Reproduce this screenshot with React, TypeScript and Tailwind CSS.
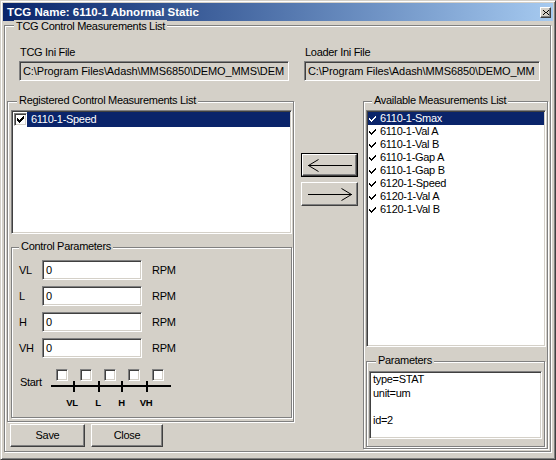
import React from 'react';

const sunken =
  'border border-t-[#808080] border-l-[#808080] border-b-white border-r-white shadow-[inset_1px_1px_0_#404040,inset_-1px_-1px_0_#d4d0c8]';
const raised =
  'border border-t-white border-l-white border-b-[#404040] border-r-[#404040] shadow-[inset_-1px_-1px_0_#808080]';

const BOX_CHECK = ['......X', '.....XX', 'X...XXX', 'XX.XXX.', 'XXXXX..', '.XXX...', '..X....'];
const LIST_CHECK = ['......X', '.....XX', 'X...XX.', 'XX.XX..', '.XXX...', '..X....'];

const CheckGlyph: React.FC<{ color?: string; pattern: string[] }> = ({ color = '#000', pattern }) => (
  <svg width="7" height={pattern.length} viewBox={`0 0 7 ${pattern.length}`} shapeRendering="crispEdges" className="block">
    {pattern.map((row, y) =>
      row.split('').map((c, x) => (c === 'X' ? <rect key={`${x}-${y}`} x={x} y={y} width="1" height="1" fill={color} /> : null))
    )}
  </svg>
);

const GroupBox: React.FC<{ label: string; labelClass: string; className: string; children?: React.ReactNode }> = ({
  label,
  labelClass,
  className,
  children,
}) => (
  <div className={`relative border border-[#808080] shadow-[1px_1px_0_#fff,inset_1px_1px_0_#fff] ${className}`}>
    <span className={`absolute ${labelClass} bg-[#d4d0c8] px-[2px] leading-[13px] whitespace-nowrap`}>{label}</span>
    {children}
  </div>
);

const Field: React.FC<{ label: string; value: string; width: string; gap?: string }> = ({ label, value, width, gap = '' }) => (
  <div className={`${width} ${gap}`}>
    <div className="pl-[1px] leading-[13px]">{label}</div>
    <div className={`mt-[2px] h-[20px] ${sunken} bg-[#d4d0c8] overflow-hidden whitespace-nowrap pl-[3px] leading-[18px] tracking-[-0.1px]`}>
      {value}
    </div>
  </div>
);

const available = [
  '6110-1-Smax',
  '6110-1-Val A',
  '6110-1-Val B',
  '6110-1-Gap A',
  '6110-1-Gap B',
  '6120-1-Speed',
  '6120-1-Val A',
  '6120-1-Val B',
];

const limits = ['VL', 'L', 'H', 'VH'];

export default function App() {
  return (
    <div className="w-[556px] h-[460px] overflow-hidden bg-[#d4d0c8] font-['Liberation_Sans',Arial,sans-serif] text-[11px] tracking-[-0.3px] text-black border border-t-[#d4d0c8] border-l-[#d4d0c8] border-b-[#404040] border-r-[#404040] shadow-[inset_1px_1px_0_#fff,inset_-1px_-1px_0_#808080] p-[2px] flex flex-col">
      {/* title bar */}
      <div className="h-[18px] shrink-0 bg-linear-to-r from-[#0a246a] to-[#a6caf0] flex items-center justify-between pl-[4px] pr-[2px]">
        <span className="text-white font-bold text-[11.5px] tracking-normal leading-[18px]">TCG Name: 6110-1 Abnormal Static</span>
        <div className={`w-[11px] h-[11px] bg-[#d4d0c8] ${raised} flex items-center justify-center`}>
          <svg width="6" height="5" viewBox="0 0 6 5" shapeRendering="crispEdges">
            <path d="M0 0h1v1H0zM5 0h1v1H5zM1 1h1v1H1zM4 1h1v1H4zM2 2h2v1H2zM1 3h1v1H1zM4 3h1v1H4zM0 4h1v1H0zM5 4h1v1H5z" fill="#000" />
          </svg>
        </div>
      </div>

      <GroupBox label="TCG Control Measurements List" labelClass="top-[-6px] left-[9px]" className="mt-[4px] ml-[1px] w-[547px] h-[427px] shrink-0">
        <div className="flex pt-[20px] pl-[14px]">
          <Field label="TCG Ini File" value={'C:\\Program Files\\Adash\\MMS6850\\DEMO_MMS\\DEM'} width="w-[270px]" />
          <Field label="Loader Ini File" value={'C:\\Program Files\\Adash\\MMS6850\\DEMO_MM'} width="w-[236px]" gap="ml-[15px]" />
        </div>

        <div className="flex mt-[20px] pl-[2px]">
          {/* left column */}
          <div className="w-[287px]">
            <GroupBox label="Registered Control Measurements List" labelClass="top-[-8px] left-[9px]" className="w-[287px] h-[321px]">
              <div className={`mt-[8px] ml-[3px] w-[281px] h-[124px] bg-white ${sunken} p-[1px]`}>
                <div className="flex items-start h-[15px]">
                  <div className={`ml-[1px] mt-[1px] w-[13px] h-[13px] bg-white ${sunken} flex items-center justify-center`}>
                    <CheckGlyph pattern={BOX_CHECK} />
                  </div>
                  <div className="flex-1 h-[15px] bg-[#0a246a] text-white pl-[4px] leading-[15px]">6110-1-Speed</div>
                </div>
              </div>

              <GroupBox label="Control Parameters" labelClass="top-[-8px] left-[7px]" className="mt-[13px] ml-[3px] w-[281px] h-[171px]">
                <div className="pt-[12px] pl-[7px]">
                  <div className="flex flex-col gap-[6px]">
                    {limits.map((l) => (
                      <div key={l} className="flex items-center h-[20px]">
                        <span className="w-[23px] leading-[13px]">{l}</span>
                        <div className={`w-[100px] h-[20px] bg-white ${sunken} pl-[3px] leading-[18px]`}>0</div>
                        <span className="ml-[10px] leading-[13px]">RPM</span>
                      </div>
                    ))}
                  </div>

                  <div className="flex items-start mt-[11px]">
                    <span className="w-[32px] pl-[1px] mt-[7px] leading-[13px]">Start</span>
                    <div>
                      <div className="flex gap-[12px] pl-[5px]">
                        {[0, 1, 2, 3, 4].map((i) => (
                          <div key={i} className={`w-[12px] h-[12px] bg-white ${sunken}`} />
                        ))}
                      </div>
                      <svg width="122" height="30" viewBox="0 0 122 30" className="block">
                        <rect x="0" y="4" width="120" height="2" fill="#000" shapeRendering="crispEdges" />
                        {[22, 47, 70, 95].map((x) => (
                          <rect key={x} x={x} y="-1" width="2" height="12" fill="#000" shapeRendering="crispEdges" />
                        ))}
                        {limits.map((l, i) => (
                          <text
                            key={l}
                            x={[21, 47, 70.5, 95][i]}
                            y="25"
                            textAnchor="middle"
                            fontSize="9.5"
                            fontWeight="600"
                            fontFamily="Liberation Sans, Arial, sans-serif"
                            letterSpacing="-0.3"
                          >
                            {l}
                          </text>
                        ))}
                      </svg>
                    </div>
                  </div>
                </div>
              </GroupBox>
            </GroupBox>

            <div className="flex gap-[6px] mt-[2px] pl-[3px]">
              <button className={`w-[75px] h-[23px] ${raised} bg-[#d4d0c8] flex items-center justify-center leading-[13px]`}>Save</button>
              <button className={`w-[72px] h-[23px] ${raised} bg-[#d4d0c8] flex items-center justify-center leading-[13px]`}>Close</button>
            </div>
          </div>

          {/* arrows */}
          <div className="ml-[7px] mt-[52px] flex flex-col gap-[5px]">
            <div className="w-[57px] h-[24px] border border-black">
              <div className={`w-full h-full ${raised} bg-[#d4d0c8] flex items-center justify-center`}>
                <svg width="44" height="13" viewBox="0 0 44 13" className="block">
                  <path d="M0 6.5H44M0.5 6.5L10.5 0.5M0.5 6.5L10.5 12.5" stroke="#000" strokeWidth="1" fill="none" />
                </svg>
              </div>
            </div>
            <div className={`w-[57px] h-[24px] ${raised} bg-[#d4d0c8] flex items-center justify-center`}>
              <svg width="44" height="13" viewBox="0 0 44 13" className="block">
                <path d="M0 6.5H44M43.5 6.5L33.5 0.5M43.5 6.5L33.5 12.5" stroke="#000" strokeWidth="1" fill="none" />
              </svg>
            </div>
          </div>

          {/* right column */}
          <GroupBox label="Available Measurements List" labelClass="top-[-8px] left-[8px]" className="ml-[5px] w-[185px] h-[348px]">
            <div className={`mt-[8px] ml-[2px] w-[180px] h-[237px] bg-white ${sunken} p-[1px]`}>
              {available.map((m, i) => (
                <div key={m} className={`flex items-center h-[13px] ${i === 0 ? 'bg-[#0a246a] text-white' : ''}`}>
                  <div className="ml-[1px]">
                    <CheckGlyph pattern={LIST_CHECK} color={i === 0 ? '#fff' : '#000'} />
                  </div>
                  <span className="ml-[4px] leading-[13px]">{m}</span>
                </div>
              ))}
            </div>

            <GroupBox label="Parameters" labelClass="top-[-8px] left-[9px]" className="mt-[14px] ml-[2px] w-[179px] h-[86px]">
              <div className={`mt-[9px] ml-[2px] w-[173px] h-[68px] bg-white ${sunken} pl-[3px] pt-[1px]`}>
                <div className="leading-[13.5px]">
                  <div>type=STAT</div>
                  <div>unit=um</div>
                  <div>&nbsp;</div>
                  <div>id=2</div>
                </div>
              </div>
            </GroupBox>
          </GroupBox>
        </div>
      </GroupBox>
    </div>
  );
}
